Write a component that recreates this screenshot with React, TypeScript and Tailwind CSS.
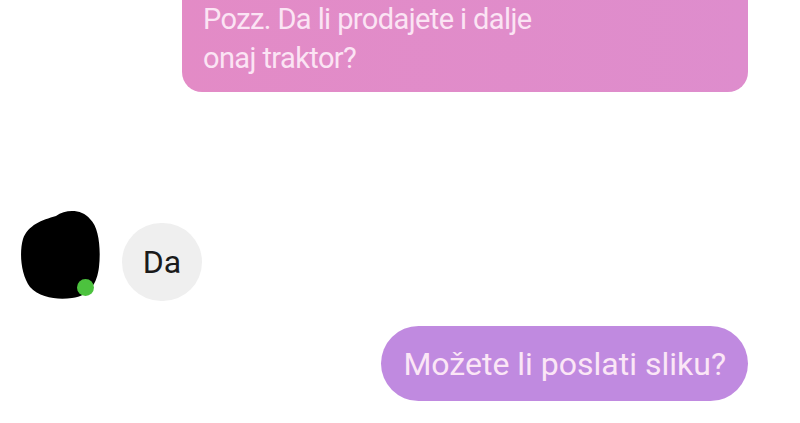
export default function App() {
  return (
    <div className="w-[800px] h-[423px] overflow-hidden bg-white font-['Roboto',sans-serif]">
      {/* Outgoing message, cut off at top */}
      <div className="flex justify-end pr-[52px]">
        <div className="w-[566px] -mt-[30px] pt-[30px] pb-[14px] pl-[21px] pr-5 rounded-[20px] bg-gradient-to-r from-[#e38bc6] to-[#de8dcd] text-[#fbe4f4] text-[29px] leading-[39px] tracking-[-0.6px]">
          Pozz. Da li prodajete i dalje
          <br />
          onaj traktor?
        </div>
      </div>

      {/* Incoming message */}
      <div className="flex items-start mt-[117px] pl-[20px] gap-[22px]">
        <div className="relative w-[80px] h-[90px]">
          <svg width="80" height="90" viewBox="0 0 80 90" className="absolute inset-0">
            <path
              d="M36 7 C46 0 62 0 70 10 C79 18 81 40 79 58 C77 74 70 87 52 89 C38 91 20 89 10 78 C1 66 -1 44 3 30 C8 16 22 11 36 7 Z"
              fill="#000"
            />
          </svg>
          <div className="absolute left-[57px] bottom-[3px] w-[17px] h-[17px] rounded-full bg-[#4cc23e]" />
        </div>
        <div className="w-[80px] h-[78px] mt-[14px] rounded-full bg-[#efefef] flex items-center justify-center text-[32px] text-[#1a1a1a]">
          Da
        </div>
      </div>

      {/* Outgoing message */}
      <div className="flex justify-end pr-[52px] mt-[25px]">
        <div className="h-[75px] px-[22px] rounded-full bg-[#c08ae0] text-[#fbe6f6] text-[32px] flex items-center">
          Možete li poslati sliku?
        </div>
      </div>
    </div>
  );
}
